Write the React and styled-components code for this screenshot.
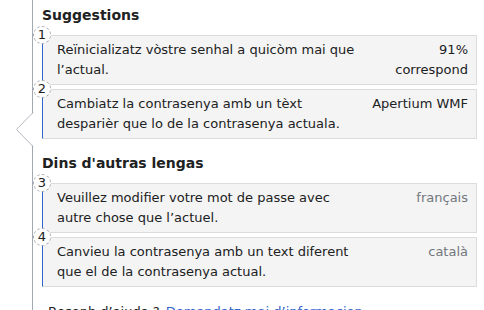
import React from "react";
import styled, { createGlobalStyle } from "styled-components";

const GlobalStyle = createGlobalStyle`
  html, body { margin: 0; padding: 0; background: #fff; }
  body {
    font-family: "DejaVu Sans", "Noto Sans", sans-serif;
    color: #202122;
    overflow: hidden;
  }
`;

const Panel = styled.div`
  position: relative;
  margin-left: 32px;
  border-left: 1px solid #a2a9b1;
  min-height: 100vh;
  box-sizing: border-box;
  padding: 5px 7px 0 9px;
`;

const Arrow = styled.svg`
  position: absolute;
  left: -17px;
  top: 112px;
  width: 18px;
  height: 36px;
  overflow: visible;
`;

const Heading = styled.h3`
  margin: ${(p) => (p.$spaced ? "14px" : "0")} 0 10px;
  font-size: 14px;
  line-height: 20px;
  font-weight: bold;
`;

const List = styled.ol`
  list-style: none;
  margin: 0;
  padding: 0;
  display: flex;
  flex-direction: column;
  gap: 4px;
`;

const Item = styled.li`
  position: relative;
  display: flex;
  align-items: flex-start;
  background: #f4f4f4;
  border: 1px solid #dcdcdc;
  border-left-color: #3366cc;
  padding: 4px 8px 4px 14px;
  font-size: 13px;
  line-height: 20px;
`;

const Number = styled.span`
  position: absolute;
  left: -10px;
  top: -10px;
  width: 18px;
  height: 18px;
  box-sizing: border-box;
  border: 1px dashed #a2a9b1;
  border-radius: 50%;
  background: #fff;
  font-size: 13px;
  line-height: 16px;
  text-align: center;
  color: #202122;
`;

const Text = styled.div`
  flex: 1;
  min-width: 0;
`;

const Meta = styled.div`
  width: 100px;
  margin-left: 8px;
  text-align: right;
  color: ${(p) => (p.$muted ? "#72777d" : "#202122")};
`;

const Footer = styled.p`
  margin: 15px 0 0 6px;
  font-size: 13px;
  line-height: 20px;
  white-space: nowrap;
`;

const Link = styled.a`
  margin-left: 6px;
  color: #3366cc;
  text-decoration: none;
`;

const suggestions = [
  { n: 1, text: "Reïnicializatz vòstre senhal a quicòm mai que l’actual.", meta: "91% correspond" },
  { n: 2, text: "Cambiatz la contrasenya amb un tèxt desparièr que lo de la contrasenya actuala.", meta: "Apertium WMF" },
];

const others = [
  { n: 3, text: "Veuillez modifier votre mot de passe avec autre chose que l’actuel.", meta: "français" },
  { n: 4, text: "Canvieu la contrasenya amb un text diferent que el de la contrasenya actual.", meta: "català" },
];

function Row({ item, muted }) {
  return (
    <Item>
      <Number>{item.n}</Number>
      <Text>{item.text}</Text>
      <Meta $muted={muted}>{item.meta}</Meta>
    </Item>
  );
}

export default function App() {
  return (
    <>
      <GlobalStyle />
      <Panel>
        <Arrow viewBox="0 0 18 36">
          <path d="M18 0 L0.5 17.5 L18 35 Z" fill="#fff" />
          <path d="M17 0.5 L0.5 17.5 L17 34.5" fill="none" stroke="#b5bac0" strokeWidth="1" />
        </Arrow>
        <Heading>Suggestions</Heading>
        <List>
          {suggestions.map((s) => (
            <Row key={s.n} item={s} />
          ))}
        </List>
        <Heading $spaced>Dins d'autras lengas</Heading>
        <List>
          {others.map((s) => (
            <Row key={s.n} item={s} muted />
          ))}
        </List>
        <Footer>
          Besonh d’ajuda ?<Link href="#">Demandatz mai d’informacion</Link>
        </Footer>
      </Panel>
    </>
  );
}
